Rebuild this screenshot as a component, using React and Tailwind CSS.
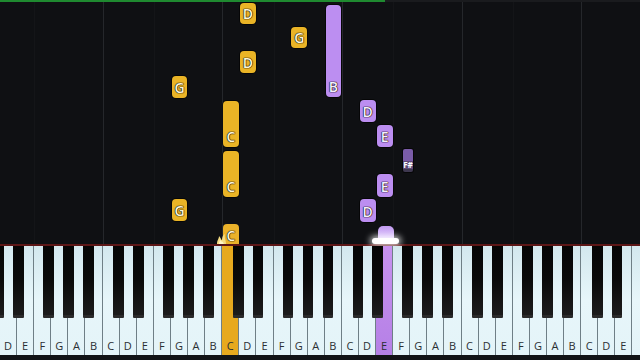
import React from 'react';

const W = 17.1;
const OCT = W * 7;
const whiteKeys = Array.from({ length: 38 }, (_, i) => 'DEFGABC'[i % 7]);

// black keys relative to each D-octave start
const blackOffsets = [-6.4, 13.3, 43.3, 63.3, 83.3];
const blackKeys = [];
for (let o = 0; o < 6; o++) {
  blackOffsets.forEach((off) => {
    const x = o * OCT + off;
    if (x > -11 && x < 640) blackKeys.push(x);
  });
}

// grid lines on C (strong) and F (faint)
const cLines = [6, 13, 20, 27, 34].map((i) => i * W);
const fLines = [2, 9, 16, 23, 30].map((i) => i * W);

// falling notes, y in canvas coords (page y - 2)
const notes = [
  { i: 14, top: 1, bottom: 22, label: 'D', hand: 'left' },
  { i: 17, top: 25, bottom: 46, label: 'G', hand: 'left' },
  { i: 14, top: 49, bottom: 71, label: 'D', hand: 'left' },
  { i: 10, top: 74, bottom: 96, label: 'G', hand: 'left' },
  { i: 13, top: 99, bottom: 145, label: 'C', hand: 'left' },
  { i: 13, top: 149, bottom: 195, label: 'C', hand: 'left' },
  { i: 10, top: 197, bottom: 219, label: 'G', hand: 'left' },
  { i: 19, top: 3, bottom: 95, label: 'B', hand: 'right' },
  { i: 21, top: 98, bottom: 120, label: 'D', hand: 'right' },
  { i: 22, top: 123, bottom: 145, label: 'E', hand: 'right' },
  { i: 22, top: 172, bottom: 195, label: 'E', hand: 'right' },
  { i: 21, top: 197, bottom: 220, label: 'D', hand: 'right' },
];

const labelCls =
  "text-[14px] font-semibold leading-[12px] [font-family:'Open_Sans',sans-serif] [text-shadow:0_0_1px_#000,0_0_1px_#000,0_0_1px_#000]";

const Note = ({ i, top, bottom, label, hand }) => {
  const gold = hand === 'left';
  return (
    <div
      className={`absolute flex items-end justify-center rounded-[4px] pb-[4px] ring-1 ring-black/60 ${gold ? 'bg-[#eab426]' : 'bg-[#bc8ef1]'}`}
      style={{ left: i * W + 0.6, width: W - 1.2, top, height: bottom - top }}
    >
      <span className={`${labelCls} ${gold ? 'text-[#fff6d8]' : 'text-[#f6eeff]'}`}>{label}</span>
    </div>
  );
};

export default function App() {
  return (
    <div className="w-[640px] h-[360px] bg-[#0f1013] flex flex-col overflow-hidden">
      {/* progress */}
      <div className="h-[2px] flex bg-[#1a1b1e]">
        <div className="w-[385px] bg-[#1f8a30]" />
      </div>

      {/* falling notes canvas */}
      <div className="relative h-[242px]">
        {fLines.map((x) => (
          <div key={'f' + x} className="absolute top-0 bottom-0 w-px bg-[#141518]" style={{ left: x }} />
        ))}
        {cLines.map((x) => (
          <div key={'c' + x} className="absolute top-0 bottom-0 w-px bg-[#25272b]" style={{ left: x }} />
        ))}

        {notes.map((n, k) => (
          <Note key={k} {...n} />
        ))}

        {/* F# black-key note */}
        <div className="absolute top-[147px] left-[403px] w-[10px] h-[23px] rounded-[2px] flex flex-col overflow-hidden ring-1 ring-black/60">
          <div className="h-[12px] bg-[#7a5ca8]" />
          <div className="h-[8px] bg-[#5d4a78] flex items-center justify-center">
            <span className="text-[8px] font-bold leading-none text-white [font-family:'Open_Sans',sans-serif]">F#</span>
          </div>
          <div className="flex-1 bg-[#3e3850]" />
        </div>

        {/* played C note */}
        <div className="absolute top-[222px] left-[222.9px] w-[16px] h-[20px] rounded-t-[4px] bg-[#ebb22a] flex items-end justify-center pb-[2px]">
          <span className={`${labelCls} text-[#fff6d8]`}>C</span>
        </div>
        <svg className="absolute top-[229px] left-[216px]" width="10" height="13" viewBox="0 0 10 13">
          <path d="M1 13 C1 9 3 8 3 5 C5 7 5 9 6 9 C6 6 7 4 9 3 C8 6 10 9 10 13 Z" fill="#f4dc82" />
          <path d="M3 13 C3 11 4 10 4 9 C5 10 6 11 7 11 C7 12 8 13 8 13 Z" fill="#fff6c8" />
        </svg>

        {/* played E note with glow */}
        <div className="absolute top-[224px] left-[377.5px] w-[16px] h-[18px] rounded-t-[5px] bg-gradient-to-b from-[#c39bf2] to-[#e9dcff]" />
        <div className="absolute top-[236px] left-[372px] w-[27px] h-[6px] rounded-full bg-white shadow-[0_0_6px_2px_rgba(255,255,255,0.8)]" />
      </div>

      {/* red strip */}
      <div className="h-[2px] bg-[#5c1616]" />

      {/* keyboard */}
      <div className="relative h-[109px] flex">
        {whiteKeys.map((l, i) => {
          const gold = i === 13;
          const purple = i === 22;
          const bg = gold
            ? 'bg-[#e7a91e]'
            : purple
            ? 'bg-gradient-to-b from-[#c791ee] to-[#b580e6]'
            : 'bg-gradient-to-b from-[#d3e8ee] via-[#e7f6fa] to-[#e4f4f8]';
          return (
            <div
              key={i}
              className={`shrink-0 w-[17.1px] h-full border-r border-[#6f7f86] flex items-end justify-center pb-[2px] ${bg}`}
            >
              {i < 37 && (
                <span className="text-[11px] leading-[14px] text-[#2b2f33] [font-family:'Open_Sans',sans-serif]">{l}</span>
              )}
            </div>
          );
        })}
        {blackKeys.map((x) => (
          <div
            key={x}
            className="absolute top-0 w-[10.6px] h-[72px] rounded-b-[1px] bg-gradient-to-b from-[#050505] via-[#0a0a0a] to-[#1c1c1c] border-b-[3px] border-[#2a2a2a]"
            style={{ left: x }}
          />
        ))}
      </div>

      <div className="flex-1 bg-[#121316]" />
    </div>
  );
}
